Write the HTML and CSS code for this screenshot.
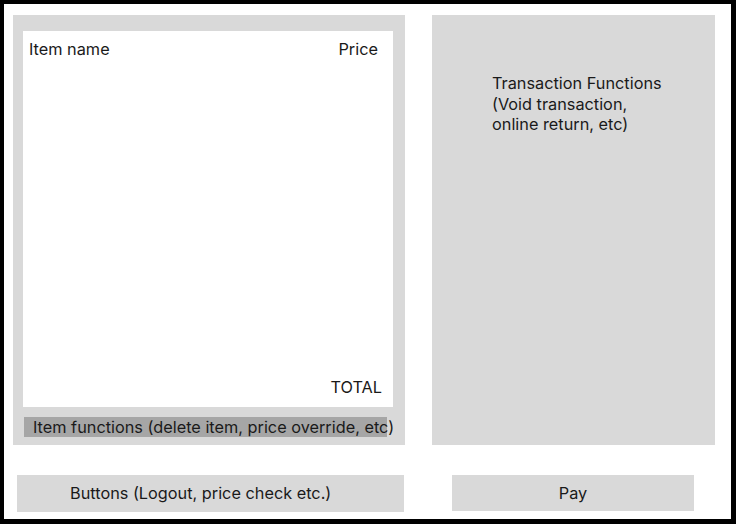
FILE: index.html
```html
<!DOCTYPE html>
<html>
<head>
<meta charset="utf-8">
<link rel="stylesheet" href="styles.css">
</head>
<body>
<div class="frame">
  <div class="main">
    <div class="left-panel">
      <div class="receipt">
        <div class="receipt-head">
          <span>Item name</span>
          <span>Price</span>
        </div>
        <div class="receipt-total">TOTAL</div>
      </div>
      <div class="item-functions"><span>Item functions (delete item, price override, etc)</span></div>
    </div>
    <div class="right-panel">
      <div class="tx-text">Transaction Functions<br>(Void transaction,<br>online return, etc)</div>
    </div>
  </div>
  <div class="bottom">
    <div class="btn-bar">Buttons (Logout, price check etc.)</div>
    <div class="pay-bar">Pay</div>
  </div>
</div>
</body>
</html>
```
FILE: styles.css
```css
html, body {
  margin: 0;
  padding: 0;
  background: #fff;
}
body {
  font-family: "Inter", "Liberation Sans", sans-serif;
  font-size: 16.3px;
  color: #1a1a1a;
}
.frame {
  box-sizing: border-box;
  width: 736px;
  height: 524px;
  border-style: solid;
  border-color: #000;
  border-width: 4px 5px 5px 4px;
  display: flex;
  flex-direction: column;
}
.main {
  display: flex;
  padding: 11px 0 0 9px;
  gap: 27px;
}
.left-panel {
  width: 392px;
  height: 430px;
  background: #d9d9d9;
  box-sizing: border-box;
  padding: 16px 0 0 10px;
}
.receipt {
  width: 370px;
  height: 376px;
  background: #fff;
  display: flex;
  flex-direction: column;
  justify-content: space-between;
  box-sizing: border-box;
}
.receipt-head {
  display: flex;
  justify-content: space-between;
  padding: 8px 15px 0 6px;
  line-height: 20px;
}
.receipt-total {
  align-self: flex-end;
  padding: 0 11px 10px 0;
  line-height: 20px;
}
.item-functions {
  margin: 10px 0 0 1px;
  width: 363px;
  height: 20px;
  background: #a6a6a6;
  white-space: nowrap;
  line-height: 20px;
  box-sizing: border-box;
  padding-left: 9px;
}
.right-panel {
  width: 283px;
  height: 430px;
  background: #d9d9d9;
  box-sizing: border-box;
  padding: 58px 0 0 60px;
}
.tx-text {
  line-height: 20.5px;
}
.bottom {
  display: flex;
  margin-top: 30px;
  padding-left: 13px;
}
.btn-bar {
  width: 387px;
  height: 37px;
  background: #d9d9d9;
  box-sizing: border-box;
  padding-left: 53px;
  line-height: 37px;
}
.pay-bar {
  margin-left: 48px;
  width: 242px;
  height: 36px;
  background: #d9d9d9;
  text-align: center;
  line-height: 36px;
}
```
